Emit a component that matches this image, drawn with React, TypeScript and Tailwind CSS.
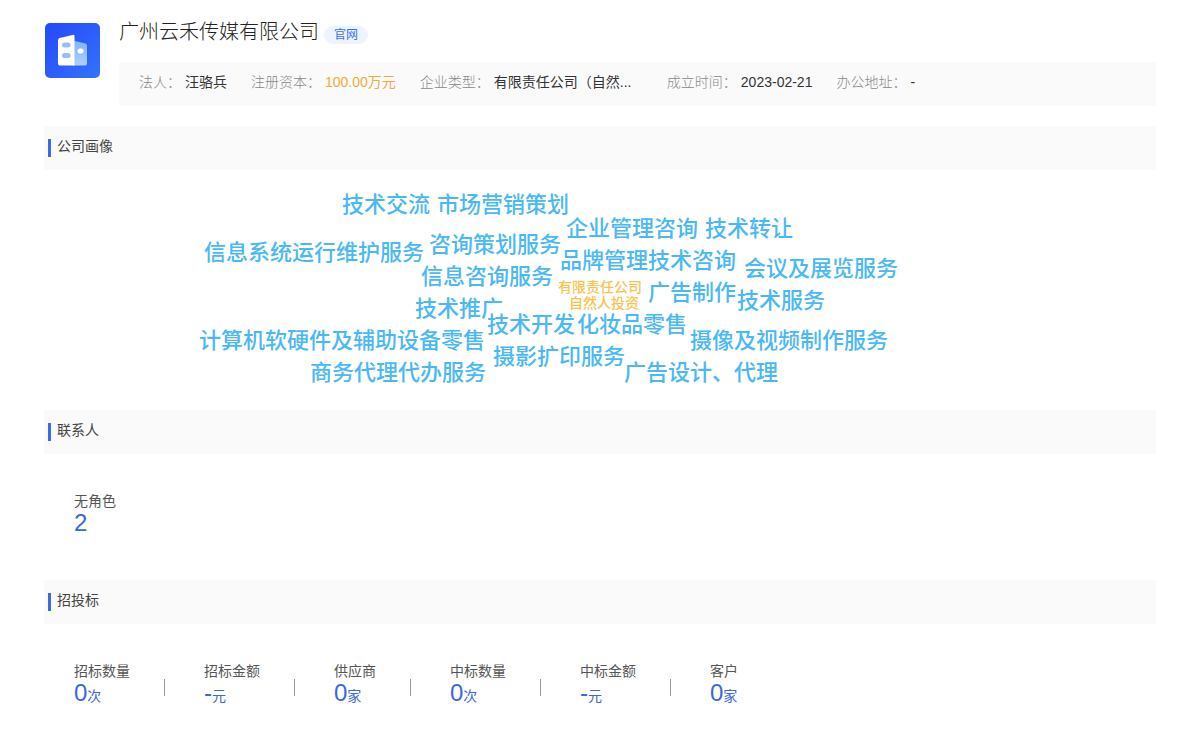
import React from "react";

type Info = { label: string; value: string; tone?: "amber"; wide?: boolean };
type Stat = { label: string; value: string; unit?: string };
type Word = { text: string; x: number; y: number; small?: boolean };

const infos: Info[] = [
  { label: "法人：", value: "汪骆兵" },
  { label: "注册资本：", value: "100.00万元", tone: "amber" },
  { label: "企业类型：", value: "有限责任公司（自然...", wide: true },
  { label: "成立时间：", value: "2023-02-21" },
  { label: "办公地址：", value: "-" },
];

// Centre line (y) and left edge (x) of each word on the cloud canvas.
const words: Word[] = [
  { text: "技术交流", x: 298, y: 35 },
  { text: "市场营销策划", x: 393, y: 35 },
  { text: "企业管理咨询", x: 522, y: 59 },
  { text: "技术转让", x: 661, y: 59 },
  { text: "信息系统运行维护服务", x: 160, y: 83 },
  { text: "咨询策划服务", x: 385, y: 75 },
  { text: "品牌管理技术咨询", x: 516, y: 91 },
  { text: "会议及展览服务", x: 700, y: 99 },
  { text: "信息咨询服务", x: 377, y: 107 },
  { text: "有限责任公司", x: 514, y: 117, small: true },
  { text: "自然人投资", x: 525, y: 133, small: true },
  { text: "广告制作", x: 604, y: 123 },
  { text: "技术服务", x: 693, y: 131 },
  { text: "技术推广", x: 371, y: 139 },
  { text: "技术开发", x: 443, y: 155 },
  { text: "化妆品零售", x: 533, y: 155 },
  { text: "计算机软硬件及辅助设备零售", x: 155, y: 171 },
  { text: "摄像及视频制作服务", x: 646, y: 171 },
  { text: "摄影扩印服务", x: 449, y: 187 },
  { text: "商务代理代办服务", x: 266, y: 203 },
  { text: "广告设计、代理", x: 580, y: 203 },
];

const bids: Stat[] = [
  { label: "招标数量", value: "0", unit: "次" },
  { label: "招标金额", value: "-", unit: "元" },
  { label: "供应商", value: "0", unit: "家" },
  { label: "中标数量", value: "0", unit: "次" },
  { label: "中标金额", value: "-", unit: "元" },
  { label: "客户", value: "0", unit: "家" },
];

function CompanyLogo() {
  return (
    <svg viewBox="0 0 56 56" className="size-14 shrink-0" aria-hidden="true">
      <defs>
        <linearGradient id="logo-bg" x1="0" y1="0" x2="1" y2="1">
          <stop offset="0" stopColor="#2448fb" />
          <stop offset="1" stopColor="#3573fb" />
        </linearGradient>
        <linearGradient id="logo-side" x1="0" y1="0" x2="0" y2="1">
          <stop offset="0" stopColor="#82b2fc" />
          <stop offset="1" stopColor="#add0fd" />
        </linearGradient>
      </defs>
      <rect x="1" y="1" width="55" height="55" rx="5" fill="url(#logo-bg)" />
      <path d="M29 18.5 41.5 21.5Q43 22 43 23.8V41.5Q43 43.5 41 43.5H29Z" fill="url(#logo-side)" />
      <path d="M30.5 12.8V43.5H16Q14 43.5 14 41.5V18.4Q14 16.6 15.7 16.1L28.5 12.9Q30.5 12.4 30.5 14Z" fill="#fff" />
      <rect x="18" y="20.5" width="8.5" height="5" rx="2.5" fill="#9bbcf8" />
      <rect x="18" y="31" width="8.5" height="5" rx="2.5" fill="#9bbcf8" />
      <rect x="33.5" y="26.5" width="6" height="5" rx="2.5" fill="#fff" />
    </svg>
  );
}

function SectionTitle({ children }: { children: React.ReactNode }) {
  return (
    <div className="flex h-11 items-center bg-[#fafafa] pl-1">
      <span className="h-[18px] w-[3px] bg-[#3a6ae8]" />
      <h2 className="pb-1 pl-1.5 text-sm text-[#444]">{children}</h2>
    </div>
  );
}

function StatItem({ stat }: { stat: Stat }) {
  return (
    <dl>
      <dt className="text-sm leading-5 text-[#555]">{stat.label}</dt>
      <dd className="text-2xl leading-6 text-[#3a66e0]">
        {stat.value}
        {stat.unit && <span className="text-sm leading-none">{stat.unit}</span>}
      </dd>
    </dl>
  );
}

export default function App() {
  return (
    <main className="bg-white px-11 pt-[22px] pb-11 font-['Liberation_Sans','Noto_Sans_CJK_SC',sans-serif]">
      <header className="flex gap-[19px]">
        <CompanyLogo />
        <div className="-mt-1.5 min-w-0 flex-1">
          <div className="flex h-[46px] items-start gap-[5px]">
            <h1 className="text-xl leading-8 font-light text-[#222]">广州云禾传媒有限公司</h1>
            <a
              href="#"
              className="mt-2.5 flex h-[18px] w-11 items-center justify-center rounded-full bg-[#edf4fe] pb-px text-xs text-[#3a72e8]"
            >
              官网
            </a>
          </div>
          <dl className="flex h-11 items-center gap-6 bg-[#fafafa] px-5 pb-1 text-sm">
            {infos.map((info) => (
              <div key={info.label} className="flex gap-1 whitespace-nowrap">
                <dt className="font-light text-[#888]">{info.label}</dt>
                <dd
                  className={
                    info.tone === "amber"
                      ? "text-[#f0aa3c]"
                      : info.wide
                        ? "min-w-[149px] text-[#333]"
                        : "text-[#333]"
                  }
                >
                  {info.value}
                </dd>
              </div>
            ))}
          </dl>
        </div>
      </header>

      <section className="mt-5">
        <SectionTitle>公司画像</SectionTitle>
        <div className="relative h-60">
          {words.map((word) => (
            <span
              key={word.text}
              className={
                word.small
                  ? "absolute -translate-y-1/2 text-sm font-medium whitespace-nowrap text-[#f9c24d]"
                  : "absolute -translate-y-1/2 text-[22px] leading-8 font-medium whitespace-nowrap text-[#4ab8f5]"
              }
              style={{ left: word.x, top: word.y }}
            >
              {word.text}
            </span>
          ))}
        </div>
      </section>

      <section>
        <SectionTitle>联系人</SectionTitle>
        <div className="px-[30px] pt-[37px] pb-[45px]">
          <StatItem stat={{ label: "无角色", value: "2" }} />
        </div>
      </section>

      <section>
        <SectionTitle>招投标</SectionTitle>
        <div className="flex px-[30px] pt-[37px]">
          {bids.map((stat, index) => (
            <div key={stat.label} className="flex">
              {index > 0 && <span className="mt-[18px] mr-[39px] ml-[34px] h-[17px] w-px bg-[#999]" />}
              <StatItem stat={stat} />
            </div>
          ))}
        </div>
      </section>
    </main>
  );
}
